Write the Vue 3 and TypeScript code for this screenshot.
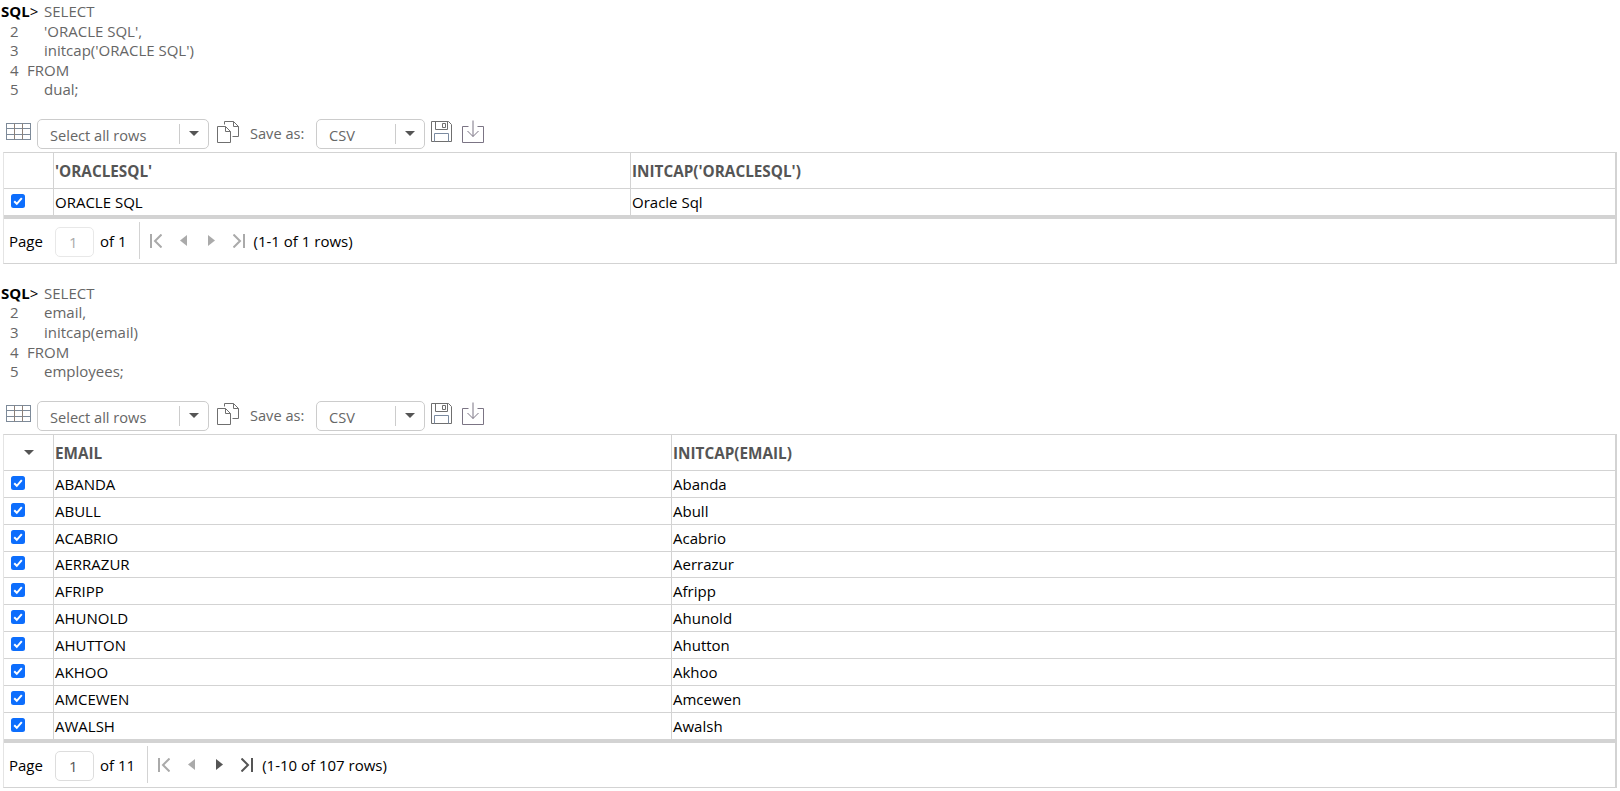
<script setup lang="ts">
interface Block {
  sql: { gutter: string; text: string; shallow?: boolean }[]
  headers: [string, string]
  rows: [string, string][]
  col: number
  sortable: boolean
  page: string
  range: string
  active: boolean
}

const blocks: Block[] = [
  {
    sql: [
      { gutter: 'SQL>', text: 'SELECT' },
      { gutter: '2', text: "'ORACLE SQL'," },
      { gutter: '3', text: "initcap('ORACLE SQL')" },
      { gutter: '4', text: 'FROM', shallow: true },
      { gutter: '5', text: 'dual;' },
    ],
    headers: ["'ORACLESQL'", "INITCAP('ORACLESQL')"],
    rows: [['ORACLE SQL', 'Oracle Sql']],
    col: 577,
    sortable: false,
    page: 'of 1',
    range: '(1-1 of 1 rows)',
    active: false,
  },
  {
    sql: [
      { gutter: 'SQL>', text: 'SELECT' },
      { gutter: '2', text: 'email,' },
      { gutter: '3', text: 'initcap(email)' },
      { gutter: '4', text: 'FROM', shallow: true },
      { gutter: '5', text: 'employees;' },
    ],
    headers: ['EMAIL', 'INITCAP(EMAIL)'],
    rows: [
      ['ABANDA', 'Abanda'],
      ['ABULL', 'Abull'],
      ['ACABRIO', 'Acabrio'],
      ['AERRAZUR', 'Aerrazur'],
      ['AFRIPP', 'Afripp'],
      ['AHUNOLD', 'Ahunold'],
      ['AHUTTON', 'Ahutton'],
      ['AKHOO', 'Akhoo'],
      ['AMCEWEN', 'Amcewen'],
      ['AWALSH', 'Awalsh'],
    ],
    col: 618,
    sortable: true,
    page: 'of 11',
    range: '(1-10 of 107 rows)',
    active: true,
  },
]
</script>

<template>
  <div class="page">
    <section v-for="(b, i) in blocks" :key="i" class="block">
      <div class="sql">
        <div v-for="l in b.sql" :key="l.gutter" class="line">
          <span class="gutter" :class="{ prompt: l.gutter === 'SQL>', shallow: l.shallow }">
            <template v-if="l.gutter === 'SQL>'"><b>SQL</b>&gt;</template>
            <template v-else>{{ l.gutter }}</template>
          </span>
          <span>{{ l.text }}</span>
        </div>
      </div>

      <div class="toolbar">
        <svg class="ic grid-ic" width="26" height="20" viewBox="0 0 26 20" fill="none">
          <rect x="0.5" y="1.5" width="24" height="16" stroke="#7d8a99" />
          <path d="M0.5 6.5H24.5M0.5 12.5H24.5" stroke="#7d8a99" />
          <path d="M8.5 1.5V17.5M16.5 1.5V17.5" stroke="#8c8078" />
        </svg>
        <div class="select wide">
          <span class="select-text">Select all rows</span>
          <span class="select-btn"><i class="caret"></i></span>
        </div>
        <svg class="ic copy-ic" width="24" height="23" viewBox="0 0 24 23" fill="none" stroke="#6f6f6f">
          <path d="M1.5 6.5H9.5L14.5 11.5V22.5H1.5Z" />
          <path d="M9.5 6.5V11.5H14.5" />
          <path d="M8.5 4.5V1.5H17.5L22.5 6.5V16.5H16.5" />
          <path d="M17.5 1.5V6.5H22.5" />
        </svg>
        <span class="save-label">Save as:</span>
        <div class="select narrow">
          <span class="select-text">CSV</span>
          <span class="select-btn"><i class="caret"></i></span>
        </div>
        <svg class="ic save-ic" width="23" height="23" viewBox="0 0 23 23" fill="none" stroke="#6f6f6f">
          <path d="M1.5 1.5H18.5L21.5 4.5V21.5H1.5Z" />
          <path d="M5.5 1.5V9.5H17.5V1.5" />
          <path d="M12.5 3.5H15.5V7.5H12.5Z" />
          <path d="M4.5 21.5V13.5H18.5V21.5" stroke="#7a8aa0" />
        </svg>
        <svg class="ic dl-ic" width="22" height="23" viewBox="0 0 22 23" fill="none" stroke="#7b7484">
          <path d="M6.5 6.5H0.5V22.5H21.5V6.5H15.5" />
          <path d="M11 0.5V16.5M5.5 11L11 16.5L16.5 11" />
        </svg>
      </div>

      <div class="grid">
        <div class="row head" :style="{ gridTemplateColumns: `49px ${b.col}px 1fr` }">
          <div class="cell check-cell sort-cell">
            <i v-if="b.sortable" class="caret"></i>
          </div>
          <div class="cell">{{ b.headers[0] }}</div>
          <div class="cell">{{ b.headers[1] }}</div>
        </div>
        <div
          v-for="r in b.rows"
          :key="r[0]"
          class="row data"
          :style="{ gridTemplateColumns: `49px ${b.col}px 1fr` }"
        >
          <div class="cell check-cell">
            <span class="check">
              <svg width="14" height="14" viewBox="0 0 14 14" fill="none">
                <path d="M3.2 7.2L5.8 9.8L10.8 4.2" stroke="#fff" stroke-width="2" />
              </svg>
            </span>
          </div>
          <div class="cell">{{ r[0] }}</div>
          <div class="cell">{{ r[1] }}</div>
        </div>
        <div class="pager">
          <span class="page-label">Page</span>
          <span class="page-input" :class="{ dim: !b.active }">1</span>
          <span class="page-of">{{ b.page }}</span>
          <span class="divider"></span>
          <svg class="nav first" width="12" height="14" viewBox="0 0 12 14">
            <path d="M1 0V14" stroke="#aaa" stroke-width="2" />
            <path d="M11.5 0.5L5 7L11.5 13.5" fill="none" stroke="#aaa" stroke-width="2" />
          </svg>
          <svg class="nav prev" width="7" height="11" viewBox="0 0 7 11"><path d="M7 0V11L0 5.5Z" fill="#aaa" /></svg>
          <svg class="nav next" width="7" height="11" viewBox="0 0 7 11">
            <path d="M0 0V11L7 5.5Z" :fill="b.active ? '#555' : '#aaa'" />
          </svg>
          <svg class="nav last" width="12" height="14" viewBox="0 0 12 14">
            <path d="M11 0V14" :stroke="b.active ? '#555' : '#aaa'" stroke-width="2" />
            <path d="M0.5 0.5L7 7L0.5 13.5" fill="none" :stroke="b.active ? '#555' : '#aaa'" stroke-width="2" />
          </svg>
          <span class="range">{{ b.range }}</span>
        </div>
      </div>
    </section>
  </div>
</template>

<style>
html,
body {
  margin: 0;
  background: #fff;
}
</style>

<style scoped>
.page {
  font-family: "Open Sans", "Noto Sans", sans-serif;
  font-size: 15px;
  color: #000;
  padding: 1px 0 4px;
  width: 1620px;
  box-sizing: border-box;
}
.block {
  margin-bottom: 19px;
}
.block:last-child {
  margin-bottom: 0;
}
.sql {
  color: #666;
  line-height: 19.6px;
  padding-top: 1px;
}
.line {
  display: flex;
  height: 19.6px;
}
.gutter {
  width: 44px;
  padding-left: 10px;
  box-sizing: border-box;
  flex: none;
}
.gutter.shallow {
  width: 27px;
}
.gutter.prompt {
  padding-left: 1px;
  color: #000;
}
.toolbar {
  display: flex;
  align-items: flex-start;
  height: 52.5px;
  padding-top: 18px;
  box-sizing: border-box;
  color: #666;
  font-size: 14.6px;
}
.ic {
  flex: none;
  display: block;
}
.grid-ic {
  margin: 4px 0 0 6px;
}
.select {
  display: flex;
  align-items: center;
  height: 30px;
  border: 1px solid #ccc;
  border-radius: 5px;
  box-sizing: border-box;
  margin-top: 1px;
}
.select.wide {
  width: 172px;
  margin-left: 5px;
}
.select.narrow {
  width: 109px;
  margin-left: 11px;
}
.select-text {
  flex: 1;
  padding-left: 12px;
  position: relative;
  top: 1px;
}
.select-btn {
  width: 28px;
  height: 20px;
  border-left: 1px solid #ccc;
  display: flex;
  align-items: center;
  justify-content: center;
}
.caret {
  display: block;
  width: 0;
  height: 0;
  border-left: 5.5px solid transparent;
  border-right: 5.5px solid transparent;
  border-top: 5.5px solid #555;
}
.copy-ic {
  margin: 2px 0 0 7px;
}
.save-label {
  margin: 5px 0 0 10px;
  width: 55px;
  flex: none;
  white-space: nowrap;
}
.save-ic {
  margin: 2px 0 0 5px;
}
.dl-ic {
  margin: 2px 0 0 9px;
}
.grid {
  margin: 0 3px;
  border: 1px solid #d3d3d3;
  border-width: 1px 2px 1px 1px;
  border-left-color: #e4e4e4;
}
.row {
  display: grid;
}
.head {
  height: 35.5px;
  border-bottom: 1px solid #d3d3d3;
  box-sizing: border-box;
  font-weight: 700;
  color: #555;
  font-size: 15.3px;
}
.data {
  height: 26.9px;
  box-sizing: border-box;
  border-bottom: 1px solid #d3d3d3;
}
.data:last-of-type {
  border-bottom: 0;
}
.cell {
  display: flex;
  align-items: center;
  padding-left: 1px;
  border-left: 1px solid #d3d3d3;
  white-space: nowrap;
  overflow: hidden;
}
.check-cell {
  border-left: 0;
  padding: 0 0 0 7px;
}
.sort-cell {
  justify-content: center;
  padding: 0;
}
.check {
  display: block;
  width: 14px;
  height: 14px;
  background: #0d6efd;
  border-radius: 2.5px;
  position: relative;
  top: -1px;
}
.check svg {
  display: block;
}
.pager {
  display: flex;
  align-items: center;
  height: 44px;
  border-top: 3px solid #d3d3d3;
}
.page-label {
  margin-left: 5px;
  width: 46px;
}
.page-input {
  width: 39px;
  height: 30px;
  border: 1px solid #ddd;
  border-radius: 5px;
  box-sizing: border-box;
  display: flex;
  align-items: center;
  padding-left: 13px;
  color: #555;
  position: relative;
  top: 1px;
}
.page-input.dim {
  color: #aaa;
  border-color: #e8e8e8;
}
.page-of {
  margin-left: 6px;
  margin-right: 12px;
}
.divider {
  width: 1px;
  height: 37px;
  background: #d3d3d3;
}
.nav {
  flex: none;
  display: block;
}
.nav.first {
  margin-left: 10px;
}
.nav.prev {
  margin-left: 18px;
}
.nav.next {
  margin-left: 21px;
}
.nav.last {
  margin-left: 18px;
}
.range {
  margin-left: 9px;
}
</style>
